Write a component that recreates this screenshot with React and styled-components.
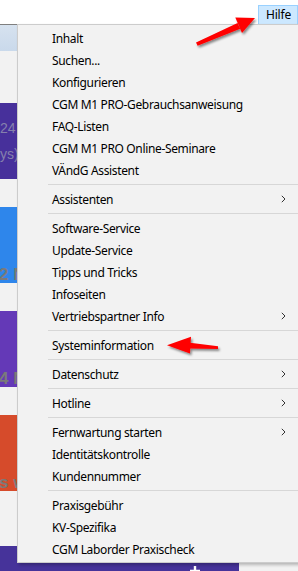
import React from "react";
import styled, { createGlobalStyle } from "styled-components";

const GlobalStyle = createGlobalStyle`
  html, body {
    margin: 0;
    padding: 0;
    overflow: hidden;
  }
`;

// Hilfe menu entries, null = separator
const menuItems = [
  { label: "Inhalt" },
  { label: "Suchen..." },
  { label: "Konfigurieren" },
  { label: "CGM M1 PRO-Gebrauchsanweisung" },
  { label: "FAQ-Listen" },
  { label: "CGM M1 PRO Online-Seminare" },
  { label: "VÄndG Assistent" },
  null,
  { label: "Assistenten", sub: true },
  null,
  { label: "Software-Service" },
  { label: "Update-Service" },
  { label: "Tipps und Tricks" },
  { label: "Infoseiten" },
  { label: "Vertriebspartner Info", sub: true },
  null,
  { label: "Systeminformation" },
  null,
  { label: "Datenschutz", sub: true },
  null,
  { label: "Hotline", sub: true },
  null,
  { label: "Fernwartung starten", sub: true },
  { label: "Identitätskontrolle" },
  { label: "Kundennummer" },
  null,
  { label: "Praxisgebühr" },
  { label: "KV-Spezifika" },
  { label: "CGM Laborder Praxischeck" },
];

const tiles = [
  { color: "#47309b", lines: ["24", "ys)"], small: true },
  { color: "#2e86eb", lines: ["2 N"] },
  { color: "#6439b7", lines: ["4 N"] },
  { color: "#d64b2b", lines: ["s w"] },
];

function Chevron() {
  return (
    <svg width="5" height="8" viewBox="0 0 5 8">
      <path d="M0.8 0.8 L4 4 L0.8 7.2" fill="none" stroke="#333" strokeWidth="1" />
    </svg>
  );
}

function Arrows() {
  return (
    <ArrowLayer width="298" height="571" viewBox="0 0 298 571">
      <defs>
        <filter id="shadow" x="-20%" y="-50%" width="140%" height="200%">
          <feDropShadow dx="1.5" dy="2" stdDeviation="1.2" floodColor="#000" floodOpacity="0.45" />
        </filter>
      </defs>
      <g fill="#f00" filter="url(#shadow)">
        <polygon points="196,42.5 237.6,22.9 240.2,28.7 197.6,45.8" />
        <polygon points="255,18 235.3,17.6 242,33" />
        <polygon points="218,346.2 190,342.8 189.6,348.6 218,349" />
        <polygon points="167,345.2 191,336.8 190,353.6" />
      </g>
    </ArrowLayer>
  );
}

function App() {
  return (
    <Page>
      <GlobalStyle />
      <TopBar>
        <HelpButton>Hilfe</HelpButton>
      </TopBar>
      <Workspace>
        <Header />
        <TileList>
          {tiles.map((t, i) => (
            <Tile key={i} $color={t.color} $small={t.small}>
              {t.lines.map((l) => (
                <TileText key={l} $small={t.small}>{l}</TileText>
              ))}
            </Tile>
          ))}
        </TileList>
        <BottomBar>
          <PlusIcon width="10" height="10" viewBox="0 0 10 10">
            <path d="M5 0 V10 M0 5 H10" stroke="#fff" strokeWidth="2.4" />
          </PlusIcon>
        </BottomBar>
        <Menu>
          {menuItems.map((item, i) =>
            item ? (
              <MenuItem key={i}>
                <span>{item.label}</span>
                {item.sub && <Chevron />}
              </MenuItem>
            ) : (
              <Separator key={i} />
            )
          )}
        </Menu>
      </Workspace>
      <Arrows />
    </Page>
  );
}

const Page = styled.div`
  position: relative;
  width: 298px;
  height: 571px;
  overflow: hidden;
  background: #f2f2f2;
  font-family: "Noto Sans", "Open Sans", sans-serif;
  font-size: 12px;
  color: #000;
`;

const TopBar = styled.div`
  height: 24px;
  background: #fff;
  display: flex;
  justify-content: flex-end;
  align-items: flex-end;
`;

const HelpButton = styled.div`
  box-sizing: border-box;
  height: 19px;
  padding: 0 6px 0 7px;
  background: #cce8ff;
  border: 1px solid #99d1ff;
  border-bottom: none;
  line-height: 17px;
  letter-spacing: -0.2px;
`;

const Workspace = styled.div`
  position: relative;
  border-top: 1px solid #7f7f7f;
  height: 546px;
`;

const Header = styled.div`
  height: 26px;
  background: linear-gradient(#d6e2ef, #c9d9eb);
`;

const TileList = styled.div`
  display: flex;
  flex-direction: column;
  gap: 28px;
  padding-top: 52px;
  width: 239px;
`;

const Tile = styled.div`
  height: 76px;
  background: ${(p) => p.$color};
  display: flex;
  flex-direction: column;
  justify-content: ${(p) => (p.$small ? "flex-start" : "flex-end")};
  gap: 8px;
  padding-top: ${(p) => (p.$small ? "16px" : "0")};
  box-sizing: border-box;
`;

const TileText = styled.div`
  font-family: "Liberation Sans", sans-serif;
  font-size: ${(p) => (p.$small ? "14px" : "17px")};
  font-weight: ${(p) => (p.$small ? "normal" : "bold")};
  color: ${(p) => (p.$small ? "#8580ad" : "#7a7a7a")};
  line-height: ${(p) => (p.$small ? "18px" : "20px")};
  margin-left: ${(p) => (p.$small ? "0" : "-1px")};
  white-space: pre;
  transform: ${(p) => (p.$small ? "none" : "translateY(2px)")};
`;

const BottomBar = styled.div`
  margin-top: 55px;
  width: 239px;
  height: 26px;
  background: #46339a;
  display: flex;
  align-items: flex-end;
  padding-left: 190px;
  box-sizing: border-box;
  overflow: hidden;
`;

const PlusIcon = styled.svg`
  display: block;
  margin-bottom: -4px;
`;

const Menu = styled.div`
  position: absolute;
  top: -1px;
  left: 17px;
  width: 290px;
  box-sizing: border-box;
  padding: 2px 0;
  background: #f2f2f2;
  border: 1px solid #cccccc;
  box-shadow: 2px 2px 3px rgba(0, 0, 0, 0.25);
  display: flex;
  flex-direction: column;
`;

const MenuItem = styled.div`
  height: 22px;
  display: flex;
  align-items: center;
  justify-content: space-between;
  padding: 0 0 0 34px;
  width: 268px;
  box-sizing: border-box;
  white-space: nowrap;
  letter-spacing: -0.35px;
`;

const Separator = styled.div`
  height: 7px;
  margin-left: 30px;
  display: flex;
  align-items: center;
  &::after {
    content: "";
    flex: 1;
    height: 1px;
    background: #d7d7d7;
  }
`;

const ArrowLayer = styled.svg`
  position: absolute;
  left: 0;
  top: 0;
  pointer-events: none;
`;

export default App;
